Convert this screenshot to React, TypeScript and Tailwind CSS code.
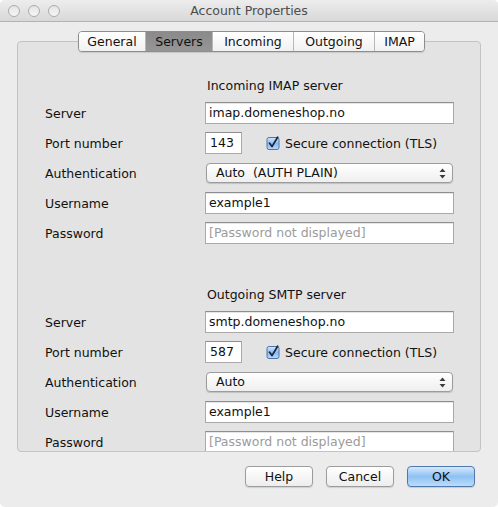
import React from 'react'

const tabs = [
  { name: 'General', w: 'w-[66px]' },
  { name: 'Servers', w: 'w-[67px]' },
  { name: 'Incoming', w: 'w-[81px]' },
  { name: 'Outgoing', w: 'w-[81px]' },
  { name: 'IMAP', w: 'w-[50px]' },
]

function Field({ value, placeholder }: { value?: string; placeholder?: string }) {
  return (
    <div className="flex h-[22px] w-[249px] items-center border border-[#a9a9a9] border-t-[#8e8e8e] bg-white pl-[3px] pt-px shadow-[inset_0_1px_0_#e6e6e6]">
      {value ? (
        <span className="text-[#111]">{value}</span>
      ) : (
        <span className="text-[#9b9b9b]">{placeholder}</span>
      )}
    </div>
  )
}

function Popup({ value }: { value: string }) {
  return (
    <div className="ml-px flex h-[20px] w-[247px] items-center justify-between rounded-[4px] border border-[#9c9c9c] bg-gradient-to-b from-white to-[#efefef] pl-[9px] pr-[6px] shadow-[0_1px_1px_rgba(0,0,0,0.15)]">
      <span className="whitespace-pre pt-px text-[#111]">{value}</span>
      <svg width="7" height="11" viewBox="0 0 7 11">
        <path d="M3.5 0.5 L6.5 4 L0.5 4 Z" fill="#3c3c3c" />
        <path d="M3.5 10.5 L6.5 7 L0.5 7 Z" fill="#3c3c3c" />
      </svg>
    </div>
  )
}

function Check() {
  return (
    <svg width="14" height="14" viewBox="0 0 14 14">
      <defs>
        <linearGradient id="cb" x1="0" y1="0" x2="0" y2="1">
          <stop offset="0" stopColor="#d7e7fb" />
          <stop offset="0.5" stopColor="#8dbbef" />
          <stop offset="1" stopColor="#b8d8fb" />
        </linearGradient>
      </defs>
      <rect x="1" y="1.5" width="12" height="12" rx="2" fill="url(#cb)" stroke="#4f74a8" />
      <path d="M3.6 7.2 L6 10.6 L11.6 1.2" fill="none" stroke="#1b2a40" strokeWidth="1.8" strokeLinecap="round" strokeLinejoin="round" />
    </svg>
  )
}

function Row({ label, children }: { label: string; children: React.ReactNode }) {
  return (
    <div className="flex h-[30px] items-center">
      <div className="w-[187px] pl-[27px] pt-[2px] text-[#111]">{label}</div>
      {children}
    </div>
  )
}

function ServerSection({ title, host, port, auth }: { title: string; host: string; port: string; auth: string }) {
  return (
    <div className="flex flex-col">
      <div className="flex h-[20px] items-center pl-[189px] pt-[2px] text-[#111]">{title}</div>
      <div className="flex flex-col pt-[3px]">
        <Row label="Server">
          <Field value={host} />
        </Row>
        <Row label="Port number">
          <div className="flex h-[22px] w-[37px] items-center border border-[#a9a9a9] border-t-[#8e8e8e] bg-white pl-[4px] pt-px text-[#111]">
            {port}
          </div>
          <div className="ml-[24px] flex items-center gap-[5px] text-[#111]">
            <Check />
            <span className="pt-[2px]">Secure connection (TLS)</span>
          </div>
        </Row>
        <Row label="Authentication">
          <Popup value={auth} />
        </Row>
        <Row label="Username">
          <Field value="example1" />
        </Row>
        <Row label="Password">
          <Field placeholder="[Password not displayed]" />
        </Row>
      </div>
    </div>
  )
}

function Button({ label, primary }: { label: string; primary?: boolean }) {
  return (
    <div
      className={
        primary
          ? 'flex h-[21px] w-[68px] items-center justify-center rounded-[4px] border border-[#4f78ad] bg-gradient-to-b from-[#d6e8fc] via-[#8ec1f3] to-[#bcdcfc] pt-px text-[#111] shadow-[0_1px_1px_rgba(0,0,0,0.15)]'
          : 'flex h-[21px] w-[68px] items-center justify-center rounded-[4px] border border-[#9c9c9c] bg-gradient-to-b from-white to-[#ededed] pt-px text-[#111] shadow-[0_1px_1px_rgba(0,0,0,0.12)]'
      }
    >
      {label}
    </div>
  )
}

export default function App() {
  return (
    <div className="h-[507px] w-[498px] bg-white font-['DejaVu_Sans',sans-serif] text-[12.5px] leading-none">
      <div className="flex h-full w-full flex-col overflow-hidden rounded-[5px] bg-[#ececec]">
        <div className="relative flex h-[22px] shrink-0 items-center justify-center border-b border-[#b3b3b3] bg-gradient-to-b from-[#ededed] to-[#d8d8d8] pt-[2px]">
          <div className="absolute left-[8px] top-[5px] flex gap-[8px]">
            <div className="h-[12px] w-[12px] rounded-full border border-[#ababab] bg-gradient-to-b from-[#e4e4e4] to-[#f6f6f6]" />
            <div className="h-[12px] w-[12px] rounded-full border border-[#ababab] bg-gradient-to-b from-[#e4e4e4] to-[#f6f6f6]" />
            <div className="h-[12px] w-[12px] rounded-full border border-[#ababab] bg-gradient-to-b from-[#e4e4e4] to-[#f6f6f6]" />
          </div>
          <span className="text-[#4d4d4d]">Account Properties</span>
        </div>

        <div className="flex flex-col px-[17px] pt-[9px]">
          <div className="relative z-10 flex justify-center pl-[5px]">
            <div className="flex h-[21px] overflow-hidden rounded-[4px] border border-[#8d8d8d] shadow-[0_1px_1px_rgba(0,0,0,0.12)]">
              {tabs.map((t, i) => (
                <div
                  key={t.name}
                  className={
                    (t.name === 'Servers'
                      ? 'bg-gradient-to-b from-[#8a8a8a] to-[#969696] '
                      : 'bg-gradient-to-b from-white to-[#f1f1f1] ') +
                    (i > 0 ? 'border-l border-[#b8b8b8] ' : '') +
                    t.w +
                    ' flex items-center justify-center pt-px text-[#111]'
                  }
                >
                  {t.name}
                </div>
              ))}
            </div>
          </div>
          <div className="mt-[-11px] h-[411px] overflow-hidden rounded-[4px] border border-[#c3c3c3] bg-[#e3e3e3] pt-[33px]">
            <ServerSection title="Incoming IMAP server" host="imap.domeneshop.no" port="143" auth="Auto  (AUTH PLAIN)" />
            <div className="h-[36px]" />
            <ServerSection title="Outgoing SMTP server" host="smtp.domeneshop.no" port="587" auth="Auto" />
          </div>
        </div>

        <div className="flex justify-end gap-[13px] pr-[23px] pt-[14px]">
          <Button label="Help" />
          <Button label="Cancel" />
          <Button label="OK" primary />
        </div>
      </div>
    </div>
  )
}
